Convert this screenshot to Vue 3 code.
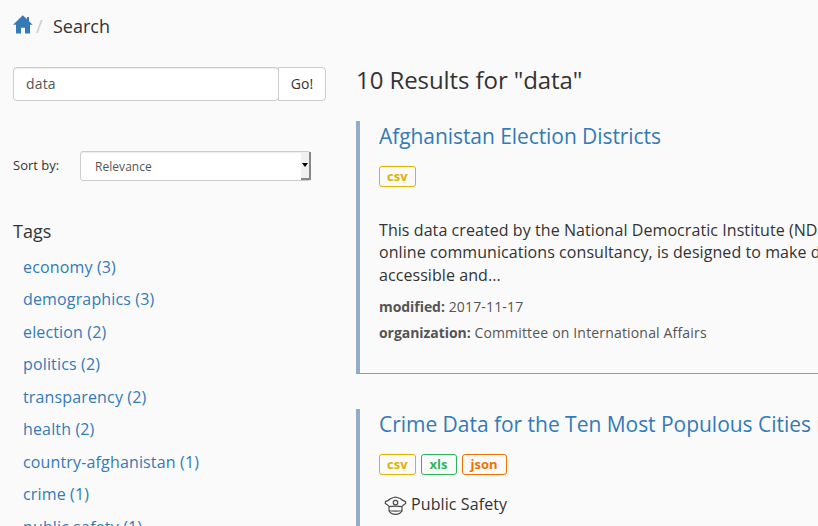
<script setup>
const tags = [
  { name: 'economy', count: 3 },
  { name: 'demographics', count: 3 },
  { name: 'election', count: 2 },
  { name: 'politics', count: 2 },
  { name: 'transparency', count: 2 },
  { name: 'health', count: 2 },
  { name: 'country-afghanistan', count: 1 },
  { name: 'crime', count: 1 },
  { name: 'public safety', count: 1 },
]
</script>

<template>
  <div class="page">
    <nav class="breadcrumb">
      <a class="home" href="#" aria-label="Home">
        <svg width="20" height="19" viewBox="0 0 20 19">
          <path fill="#337ab7" d="M9.8 0.3 19.7 9.8H17V18.6H12V12.8H8V18.6H3V9.8H0.1L9.8 0.3Z" />
          <path fill="#337ab7" d="M14 2h2v5h-2z" />
        </svg>
      </a>
      <span class="slash">/</span>
      <span class="current">Search</span>
    </nav>
    <div class="columns">
      <aside class="sidebar">
        <div class="search">
          <div class="query">data</div>
          <button class="go">Go!</button>
        </div>
        <div class="sort">
          <span class="sort-label">Sort by:</span>
          <div class="select">
            <span class="value">Relevance</span>
            <span class="arrow">
              <svg width="6" height="4" viewBox="0 0 6 4"><path d="M0 0h6L3 4z" /></svg>
            </span>
          </div>
        </div>
        <h3 class="tags-title">Tags</h3>
        <ul class="tags">
          <li v-for="tag in tags" :key="tag.name"><a href="#">{{ tag.name }} ({{ tag.count }})</a></li>
        </ul>
      </aside>
      <main class="results">
        <h1>10 Results for "data"</h1>
        <article class="card">
          <h2 class="tight"><a href="#">Afghanistan Election Districts</a></h2>
          <div class="formats"><span class="format csv">csv</span></div>
          <p class="description">
            This data created by the National Democratic Institute (NDI) and Development Seed, an<br />
            online communications consultancy, is designed to make detailed election data<br />
            accessible and...
          </p>
          <p class="meta"><b>modified:</b> 2017-11-17</p>
          <p class="meta"><b>organization:</b> Committee on International Affairs</p>
        </article>
        <article class="card">
          <h2><a href="#">Crime Data for the Ten Most Populous Cities in the U.S.</a></h2>
          <div class="formats">
            <span class="format csv">csv</span>
            <span class="format xls">xls</span>
            <span class="format json">json</span>
          </div>
          <div class="topic">
            <svg width="24" height="20" viewBox="0 0 24 20" fill="none" stroke="#484848" stroke-width="1.15" stroke-linejoin="round">
              <path d="M5.2 10.4 1.2 7.2 1.4 5.6C3.2 5 4.8 4.3 6.7 2.5L11.5 1l4.8 1.5C18.2 4.3 19.8 5 21.6 5.6l.2 1.6-4 3.2" />
              <circle cx="11.5" cy="6.6" r="2.3" />
              <path d="M5 10.6Q11.5 9.8 18 10.6V14.8Q11.5 15.5 5 14.8Z" />
              <path d="M5 14.8C6.3 17.2 8.7 18.4 11.5 18.4S16.7 17.2 18 14.8" />
            </svg>
            <span>Public Safety</span>
          </div>
        </article>
      </main>
    </div>
  </div>
</template>

<style>
body {
  margin: 0;
  overflow: hidden;
  background: #fafafa;
}
</style>

<style scoped>
* {
  box-sizing: border-box;
}
.page {
  height: 526px;
  overflow: hidden;
  padding: 13px 0 0 13px;
  background: #fafafa;
  color: #333;
  font-family: 'Open Sans', sans-serif;
  font-size: 16px;
}
a {
  color: #337ab7;
  text-decoration: none;
}
h1, h2, h3, p, ul {
  margin: 0;
  padding: 0;
  font-weight: 400;
}
.breadcrumb {
  display: flex;
  height: 54px;
  line-height: 26px;
  font-size: 18px;
}
.home {
  width: 20px;
  padding-top: 2px;
}
.home svg {
  display: block;
}
.slash {
  width: 20px;
  padding-left: 3px;
  color: #ccc;
}
.columns {
  display: grid;
  grid-template-columns: 313px 700px;
  column-gap: 30px;
}
.search {
  display: flex;
  height: 34px;
  font-size: 14px;
}
.query {
  width: 266px;
  padding: 0 12px;
  border: 1px solid #ccc;
  border-radius: 4px;
  background: #fff;
  box-shadow: inset 0 1px 1px rgba(0, 0, 0, 0.075);
  color: #555;
  letter-spacing: 0.15px;
  line-height: 32px;
}
.go {
  width: 48px;
  margin-left: -1px;
  padding: 0 0 2px;
  border: 1px solid #ccc;
  border-radius: 0 4px 4px 0;
  background: #fff;
  color: #333;
  font: 14px 'Open Sans', sans-serif;
}
.sort {
  display: flex;
  height: 30px;
  margin-top: 50px;
  font-size: 13px;
  line-height: 29px;
}
.sort-label {
  width: 67px;
}
.select {
  display: flex;
  justify-content: space-between;
  width: 231px;
  height: 30px;
  padding-left: 14px;
  border: 1px solid #ccc;
  border-radius: 3px;
  background: #fff;
  box-shadow: inset 0 1px 1px rgba(0, 0, 0, 0.075);
  color: #555;
  font-size: 12px;
  letter-spacing: 0.05px;
}
.arrow {
  display: flex;
  align-items: center;
  justify-content: center;
  width: 10px;
  margin-right: -1px;
  border-right: 2px solid #888;
  border-bottom: 2px solid #888;
  background: #f0f0f0;
}
.tags-title {
  margin-top: 37px;
  font-size: 18px;
  line-height: 26px;
}
.tags {
  padding: 6px 0 0 10px;
  list-style: none;
  letter-spacing: 0.15px;
}
.tags li {
  height: 32.45px;
  line-height: 34px;
}
.results h1 {
  height: 54px;
  font-size: 24px;
  letter-spacing: -0.08px;
  line-height: 26px;
}
.card {
  height: 253px;
  margin-bottom: 35px;
  padding-left: 19px;
  border-left: 4px solid #95adc4;
  border-bottom: 1px solid #999;
  white-space: nowrap;
}
.card h2 {
  height: 30px;
  font-size: 21px;
  letter-spacing: -0.03px;
  line-height: 31px;
}
.card h2.tight {
  letter-spacing: -0.07px;
}
.formats {
  display: flex;
  gap: 5px;
  margin-top: 15px;
}
.format {
  height: 21px;
  padding: 0 7px;
  border: 1px solid;
  border-radius: 3px;
  font-size: 13px;
  font-weight: 700;
  line-height: 19px;
}
.csv {
  color: #dfb100;
}
.xls {
  width: 36px;
  padding-left: 8px;
  color: #2db55d;
}
.json {
  width: 45px;
  padding-left: 8px;
  color: #ef7100;
}
.description {
  height: 68.5px;
  margin: 31.5px 0 10px;
  letter-spacing: 0.07px;
  line-height: 22.5px;
}
.meta {
  height: 26px;
  color: #555;
  font-size: 14px;
  letter-spacing: 0.17px;
  line-height: 20px;
}
.meta b {
  letter-spacing: -0.06px;
}
.topic {
  display: flex;
  gap: 3px;
  margin-top: 18px;
  padding-left: 5px;
  letter-spacing: 0.1px;
  line-height: 22px;
}
.topic svg {
  margin-top: 3px;
}
</style>
